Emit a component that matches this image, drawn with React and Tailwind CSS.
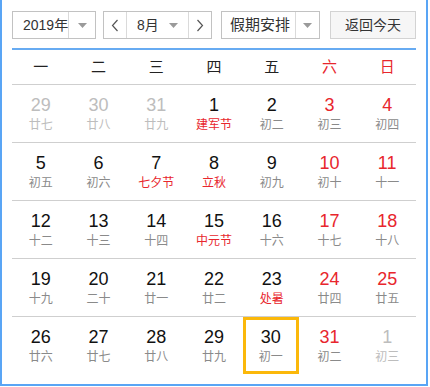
import React from 'react';

const weekDays = ['一', '二', '三', '四', '五', '六', '日'];

// t: 'other' 非本月, 'fest' 节日/节气, 'sel' 选中
const weeks = [
  [[29, '廿七', 'other'], [30, '廿八', 'other'], [31, '廿九', 'other'], [1, '建军节', 'fest'], [2, '初二'], [3, '初三'], [4, '初四']],
  [[5, '初五'], [6, '初六'], [7, '七夕节', 'fest'], [8, '立秋', 'fest'], [9, '初九'], [10, '初十'], [11, '十一']],
  [[12, '十二'], [13, '十三'], [14, '十四'], [15, '中元节', 'fest'], [16, '十六'], [17, '十七'], [18, '十八']],
  [[19, '十九'], [20, '二十'], [21, '廿一'], [22, '廿二'], [23, '处暑', 'fest'], [24, '廿四'], [25, '廿五']],
  [[26, '廿六'], [27, '廿七'], [28, '廿八'], [29, '廿九'], [30, '初一', 'sel'], [31, '初二'], [1, '初三', 'other']],
];

function Caret() {
  return (
    <svg width="9" height="5" viewBox="0 0 9 5">
      <path d="M0 0h9L4.5 5z" fill="#9a9a9a" />
    </svg>
  );
}

function Chevron({ dir }) {
  return (
    <svg width="8" height="13" viewBox="0 0 8 13">
      <polyline
        points={dir === 'left' ? '6.5,1 1.5,6.5 6.5,12' : '1.5,1 6.5,6.5 1.5,12'}
        fill="none"
        stroke="#555"
        strokeWidth="1.2"
      />
    </svg>
  );
}

function DayCell({ day, col }) {
  const [num, lunar, t] = day;
  const weekend = col >= 5;
  let numColor = 'text-[#111]';
  let lunarColor = 'text-[#8a8a8a]';
  if (t === 'other') {
    numColor = 'text-[#bdbdbd]';
    lunarColor = 'text-[#bdbdbd]';
  } else if (weekend) {
    numColor = 'text-[#e8262d]';
  }
  if (t === 'fest') lunarColor = 'text-[#e8262d]';

  return (
    <div
      className={`flex flex-col items-center h-[57px] ${
        t === 'sel' ? 'border-[3px] border-[#fbb80a] w-[56px] pt-[6px]' : 'pt-[9px]'
      }`}
    >
      <span className={`text-[18px] leading-[22px] ${numColor}`}>{num}</span>
      <span className={`text-[12px] leading-[18px] ${lunarColor}`}>{lunar}</span>
    </div>
  );
}

export default function App() {
  return (
    <div
      className="w-[428px] h-[386px] bg-white border-l-2 border-r-2 border-b-2 border-[#59a5f5] px-[10px] pt-[11px]"
      style={{ fontFamily: '"Liberation Sans", "Noto Sans CJK SC", sans-serif' }}
    >
      {/* 顶部操作栏 */}
      <div className="flex items-center h-[28px] text-[14px] text-[#333] whitespace-nowrap">
        <div className="flex h-full w-[84px] border border-[#c2c2c2] bg-white">
          <div className="flex-1 flex items-center pl-[10px]">2019年</div>
          <div className="w-[27px] shrink-0 flex items-center justify-center border-l border-[#dadada]">
            <Caret />
          </div>
        </div>
        <div className="flex h-full w-[109px] ml-[7px] border border-[#c2c2c2] bg-white">
          <div className="w-[23px] flex items-center justify-center border-r border-[#dadada]">
            <Chevron dir="left" />
          </div>
          <div className="flex-1 flex items-center justify-between pl-[10px] pr-[10px]">
            <span>8月</span>
            <Caret />
          </div>
          <div className="w-[23px] flex items-center justify-center border-l border-[#dadada]">
            <Chevron dir="right" />
          </div>
        </div>
        <div className="flex h-full w-[99px] ml-[9px] border border-[#c2c2c2] bg-white">
          <div className="flex-1 min-w-0 flex items-center pl-[8px] text-[15px]">假期安排</div>
          <div className="w-[24px] shrink-0 flex items-center justify-center border-l border-[#dadada]">
            <Caret />
          </div>
        </div>
        <div className="flex h-full w-[86px] ml-auto items-center justify-center border border-[#d3d3d3] bg-[#f6f6f6]">
          返回今天
        </div>
      </div>

      <div className="h-[2px] mt-[9px] bg-[#67abf2]" />

      {/* 星期 */}
      <div className="grid grid-cols-7 h-[34px] text-[15px]">
        {weekDays.map((d, i) => (
          <div
            key={d}
            className={`flex items-center justify-center ${i >= 5 ? 'text-[#e8262d]' : 'text-[#222]'}`}
          >
            {d}
          </div>
        ))}
      </div>

      {/* 日期 */}
      {weeks.map((week, r) => (
        <div key={r} className="grid grid-cols-7 border-t border-[#cfcfcf]">
          {week.map((day, c) => (
            <DayCell key={c} day={day} col={c} />
          ))}
        </div>
      ))}
    </div>
  );
}
